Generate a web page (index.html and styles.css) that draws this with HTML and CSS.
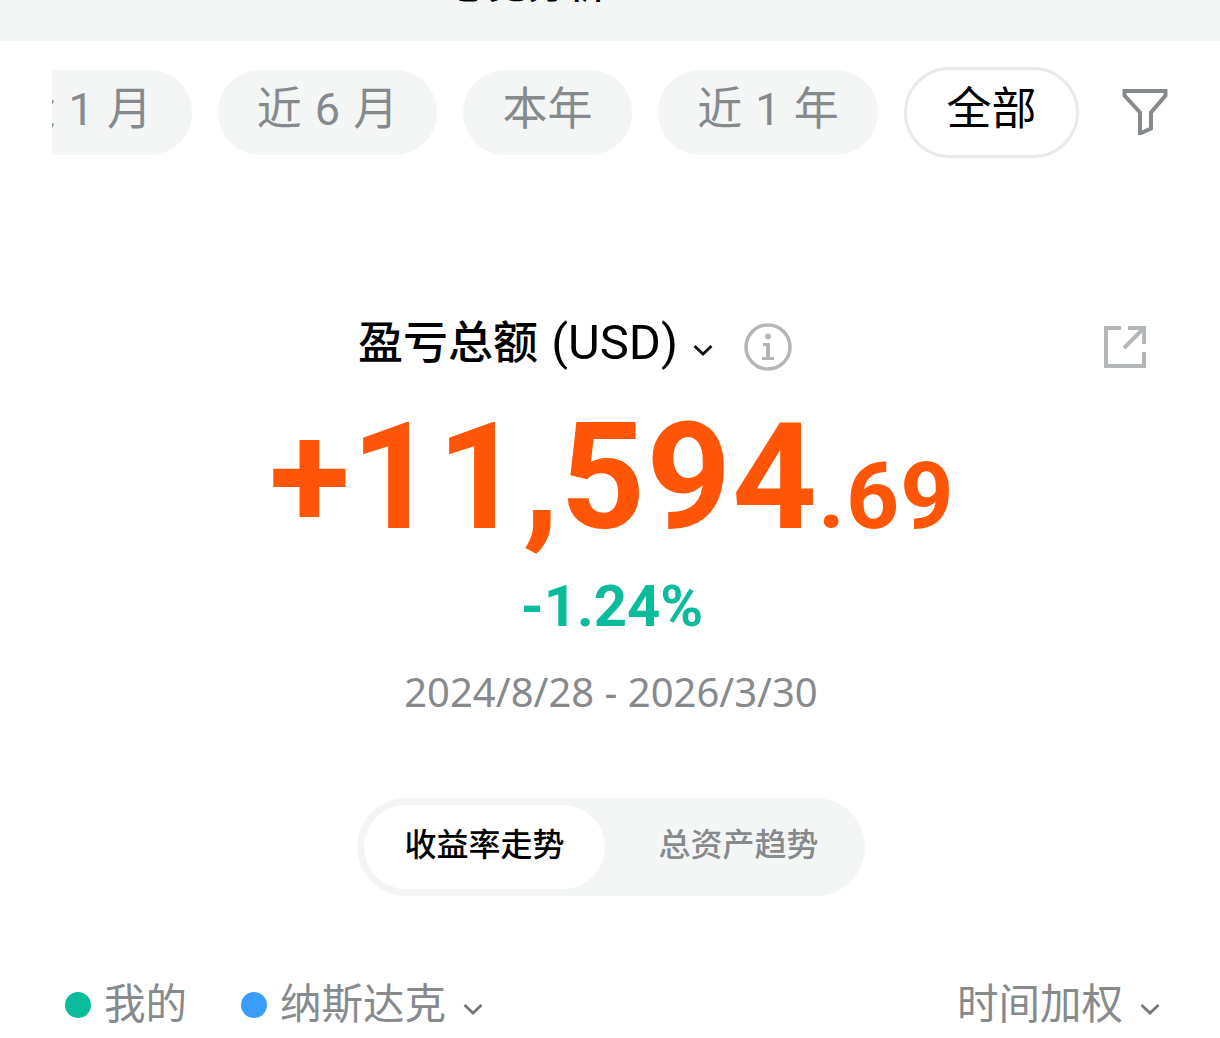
FILE: index.html
```html
<!DOCTYPE html>
<html lang="zh-CN">
<head>
<meta charset="utf-8">
<title>盈亏总额</title>
<link rel="stylesheet" href="styles.css">
</head>
<body>
<header class="top-band"><span class="top-title">总览分析</span></header>
<nav class="range-row">
  <div class="range-list">
    <span class="chip chip-cut"><span class="chip-cut-text">近 1 月</span></span>
    <span class="chip chip-6m">近 6 月</span>
    <span class="chip chip-year">本年</span>
    <span class="chip chip-1y">近 1 年</span>
    <span class="chip chip-active">全部</span>
  </div>
  <svg class="filter-icon" width="46" height="46" viewBox="0 0 46 46"><path d="M2.500 2h41v4.500L29 23.500v16l-11 5v-21L2.500 6.500z" fill="none" stroke="#868a8d" stroke-width="4"/></svg>
</nav>
<section class="summary">
  <div class="summary-head">
    <span class="summary-title">盈亏总额 <span class="title-unit">(USD)</span></span>
    <svg class="caret-black" width="20" height="12" viewBox="0 0 20 12"><path d="M1.500 2l8.500 8 8.500-8" fill="none" stroke="#111" stroke-width="2.800"/></svg>
    <svg class="info-icon" width="48" height="48" viewBox="0 0 48 48"><circle cx="24" cy="24" r="22" fill="none" stroke="#b4b7b9" stroke-width="3.500"/><circle cx="24" cy="13.500" r="3" fill="#b4b7b9"/><path d="M19 20h7v14h4v3H18v-3h4V23h-3z" fill="#b4b7b9"/></svg>
    <svg class="share-icon" width="42" height="42" viewBox="0 0 42 42"><path d="M17 2H2v38h38V26M24 2h16v16M40 2L20 22" fill="none" stroke="#b4b7b9" stroke-width="4"/></svg>
  </div>
  <div class="amount"><span class="amount-main">+11,594</span><span class="amount-cents">.69</span></div>
  <div class="percent">-1.24%</div>
  <div class="dates">2024/8/28 - 2026/3/30</div>
  <div class="segment">
    <span class="seg seg-active">收益率走势</span>
    <span class="seg seg-idle">总资产趋势</span>
  </div>
</section>
<footer class="legend">
  <div class="legend-left">
    <span class="dot dot-green"></span><span class="legend-text">我的</span>
    <span class="dot dot-blue"></span><span class="legend-text">纳斯达克</span>
    <svg class="caret" width="20" height="12" viewBox="0 0 20 12"><path d="M1.500 2l8.500 8 8.500-8" fill="none" stroke="#74787b" stroke-width="2.800"/></svg>
  </div>
  <div class="legend-right">
    <span class="legend-text">时间加权</span>
    <svg class="caret" width="20" height="12" viewBox="0 0 20 12"><path d="M1.500 2l8.500 8 8.500-8" fill="none" stroke="#74787b" stroke-width="2.800"/></svg>
  </div>
</footer>
</body>
</html>
```
FILE: styles.css
```css
* { box-sizing: border-box; }
html, body { margin: 0; padding: 0; }
body {
  width: 1220px;
  height: 1038px;
  overflow: hidden;
  background: #fff;
  font-family: "Roboto", "Noto Sans CJK SC", sans-serif;
  color: #000;
}
.top-band {
  height: 41px;
  background: #f4f6f6;
  overflow: hidden;
  display: flex;
  justify-content: center;
}
.top-title {
  font-size: 40px;
  line-height: 40px;
  margin-top: -35px;
  margin-left: -166px;
  font-weight: 500;
}
.range-row {
  height: 118px;
  padding: 26px 0 0 52px;
  display: flex;
  align-items: flex-start;
}
.range-list { display: flex; gap: 26px; align-items: flex-start; }
.chip {
  height: 85px;
  margin-top: 3px;
  border-radius: 42px;
  background: #f4f6f6;
  color: #868a8d;
  font-size: 45px;
  line-height: 80px;
  word-spacing: 2px;
  text-align: center;
  flex: none;
  white-space: nowrap;
}
.chip-cut {
  width: 140px;
  border-radius: 0 42px 42px 0;
  overflow: hidden;
  display: flex;
  justify-content: flex-end;
  padding-right: 40px;
}
.chip-cut-text { flex: none; }
.chip-6m { width: 219px; }
.chip-year { width: 169px; }
.chip-1y { width: 220px; }
.chip-active {
  width: 175px;
  height: 91px;
  margin-top: 0;
  border-radius: 46px;
  background: #fff;
  border: 3px solid #e9ebeb;
  color: #000;
  line-height: 80px;
}
.filter-icon { margin: 22px 0 0 43px; flex: none; }
.summary {
  position: relative;
  display: flex;
  flex-direction: column;
  align-items: center;
}
.summary-head {
  height: 60px;
  margin-top: 154px;
  width: 100%;
  display: flex;
  align-items: center;
  padding-left: 358px;
}
.summary-title { font-size: 45px; line-height: 60px; word-spacing: 2px; white-space: nowrap; font-weight: 500; }
.title-unit { font-size: 49px; font-weight: 400; }
.caret-black { margin: 13px 0 0 15px; flex: none; }
.info-icon { margin: 8px 0 0 31px; flex: none; }
.share-icon { position: absolute; left: 1104px; top: 167px; }
.amount {
  height: 150px;
  margin: 30px 0 0 4px;
  color: #ff5507;
  font-weight: 700;
  line-height: 150px;
  white-space: nowrap;
  letter-spacing: 1px;
}
.amount-main { font-size: 148px; }
.amount-cents { font-size: 93px; }
.percent {
  margin: 22px 0 0 4px;
  height: 62px;
  font-weight: 700;
  font-size: 58px;
  line-height: 62px;
  color: #0abb9c;
}
.dates {
  margin: 28px 0 0 2px;
  height: 54px;
  font-family: "Noto Sans", sans-serif;
  font-size: 40px;
  line-height: 54px;
  color: #868a8d;
}
.segment {
  margin: 79px 0 0 2px;
  width: 508px;
  height: 98px;
  border-radius: 49px;
  background: #f4f6f6;
  padding: 7px;
  display: flex;
}
.seg {
  height: 84px;
  border-radius: 42px;
  font-size: 32px;
  line-height: 80px;
  text-align: center;
}
.seg-active { width: 241px; background: #fff; color: #000; font-weight: 500; }
.seg-idle { width: 253px; padding-left: 14px; color: #868a8d; font-weight: 500; }
.legend {
  margin-top: 79px;
  padding: 0 60px 0 65px;
  display: flex;
  justify-content: space-between;
  align-items: flex-start;
}
.legend-left, .legend-right { display: flex; align-items: center; height: 60px; }
.legend-text { font-size: 41.500px; line-height: 60px; color: #868a8d; white-space: nowrap; }
.dot { width: 26px; height: 26px; border-radius: 50%; flex: none; margin-right: 13px; }
.dot-green { background: #0abb9c; }
.dot-blue { background: #3a9dfc; margin-left: 54px; }
.caret { margin: 8px 0 0 17px; flex: none; }
```
